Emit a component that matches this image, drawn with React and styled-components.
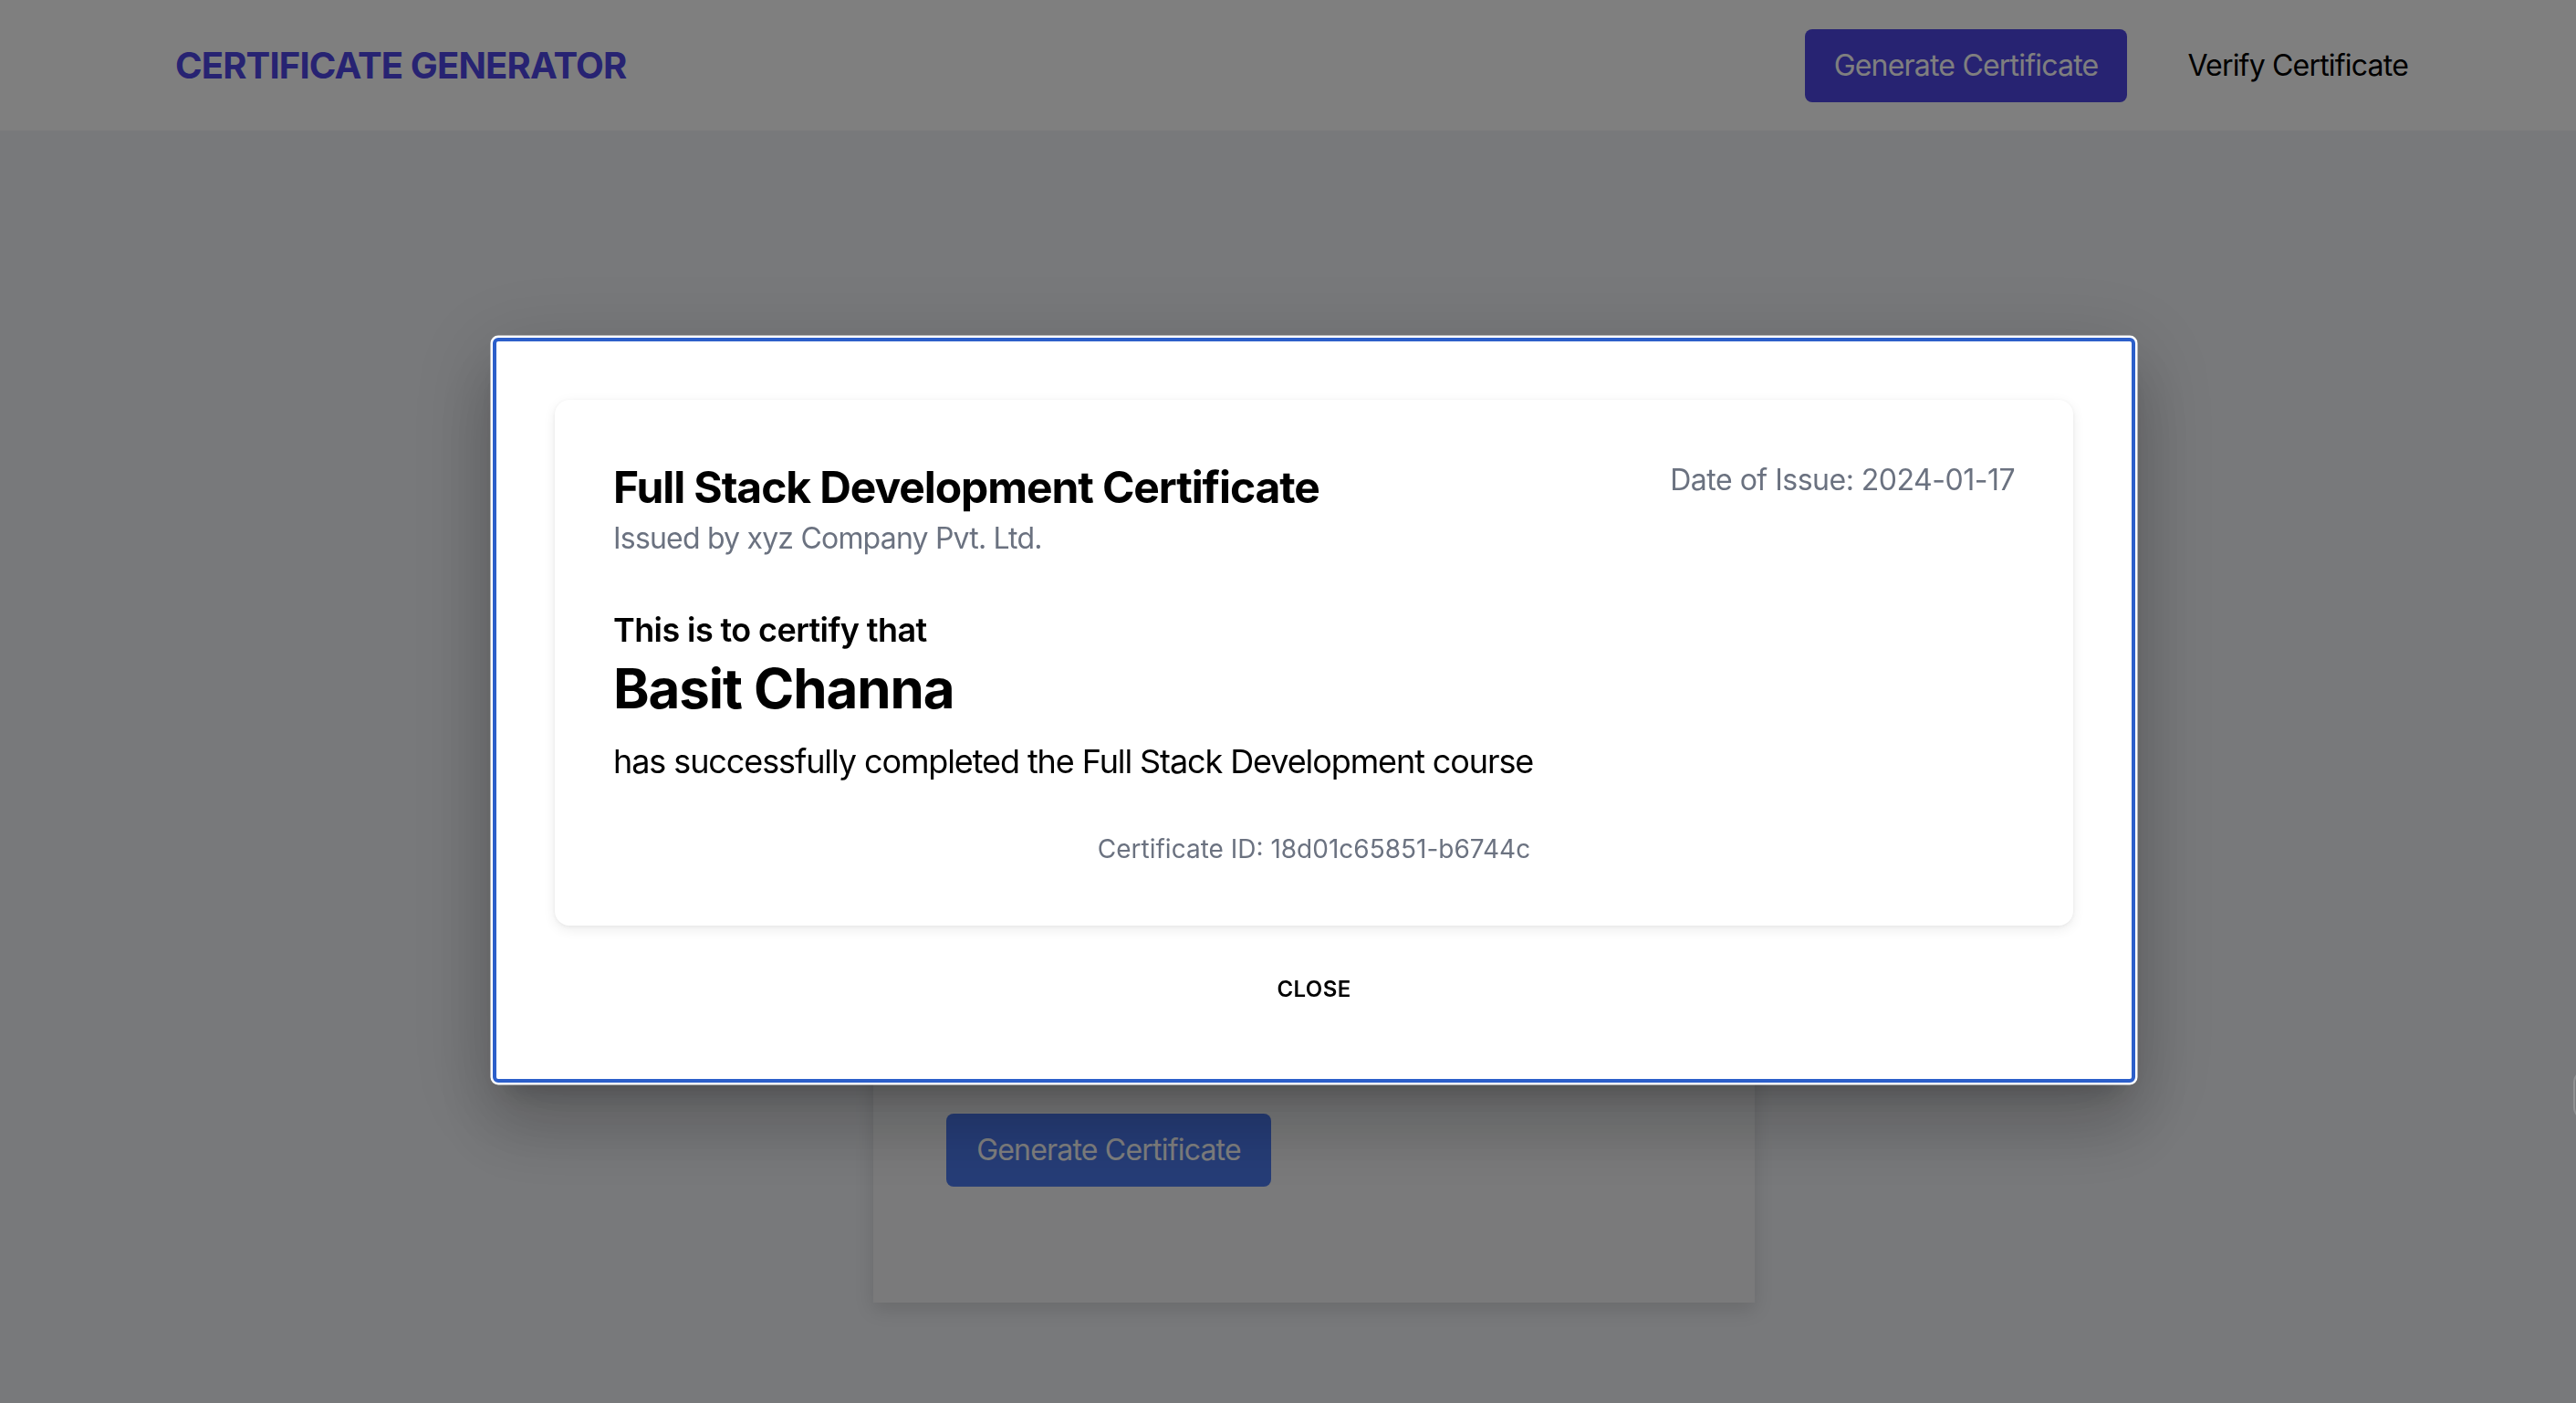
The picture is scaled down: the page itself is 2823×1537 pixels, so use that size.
import React from "react";
import styled, { createGlobalStyle } from "styled-components";

const Global = createGlobalStyle`
  html, body { margin: 0; padding: 0; }
  body {
    font-family: Inter, "Noto Sans", "Liberation Sans", sans-serif;
    background: #f0f2f6;
    color: #000;
    overflow: hidden;
  }
  * { box-sizing: border-box; }
`;

const Page = styled.div`
  min-height: 100vh;
  display: flex;
  flex-direction: column;
`;

const Header = styled.header`
  height: 143px;
  background: #ffffff;
  display: flex;
  align-items: center;
  justify-content: space-between;
  padding: 0 152px 0 192px;
`;

const Brand = styled.h1`
  margin: 0;
  font-size: 40px;
  line-height: 56px;
  font-weight: 700;
  color: #4f46e5;
  letter-spacing: -0.85px;
`;

const Nav = styled.nav`
  display: flex;
  align-items: center;
  gap: 34px;
`;

const NavButton = styled.button`
  height: 80px;
  padding: 0 32px;
  border: none;
  border-radius: 8px;
  font-family: inherit;
  font-size: 32px;
  line-height: 48px;
  letter-spacing: -0.8px;
  background: ${(p) => (p.$active ? "#4f46e5" : "transparent")};
  color: ${(p) => (p.$active ? "#ffffff" : "#000000")};
  cursor: pointer;
`;

const Main = styled.main`
  flex: 1;
  display: flex;
  justify-content: center;
  align-items: flex-start;
  padding: 277px 0 0 57px;
`;

const FormCard = styled.section`
  width: 966px;
  background: #f4f5f7;
  box-shadow: 0 8px 20px rgba(0, 0, 0, 0.12);
  padding: 80px 80px 127px;
  display: flex;
  flex-direction: column;
`;

const Fields = styled.div`
  display: grid;
  gap: 40px;
  margin-bottom: 120px;
`;

const Input = styled.input`
  height: 120px;
  border: 2px solid #d1d5db;
  border-radius: 8px;
  background: #fff;
`;

const SubmitButton = styled.button`
  align-self: flex-start;
  width: 356px;
  height: 80px;
  border: none;
  border-radius: 8px;
  background: #4c7aef;
  color: #fff;
  font-family: inherit;
  font-size: 32px;
  line-height: 48px;
  letter-spacing: -0.8px;
`;

const Overlay = styled.div`
  position: fixed;
  inset: 0;
  background: rgba(0, 0, 0, 0.5);
  display: flex;
  align-items: center;
  justify-content: center;
  padding: 19px 0 0 57px;
`;

const Modal = styled.div`
  width: 1800px;
  background: #ffffff;
  border: 4px solid #2c5fca;
  border-radius: 6px;
  box-shadow: 0 0 0 2.5px #ffffff, 0 22px 30px -14px rgba(0, 0, 0, 0.2),
    0 48px 76px 6px rgba(0, 0, 0, 0.14), 0 18px 92px 16px rgba(0, 0, 0, 0.12);
  padding: 64px 64px 0;
  display: flex;
  flex-direction: column;
`;

const Certificate = styled.article`
  background: #ffffff;
  border-radius: 16px;
  box-shadow: 0 4px 14px rgba(0, 0, 0, 0.08), 0 1px 4px rgba(0, 0, 0, 0.05);
  padding: 64px;
  display: flex;
  flex-direction: column;
`;

const TopRow = styled.div`
  display: flex;
  justify-content: space-between;
  align-items: flex-start;
`;

const Titles = styled.div`
  display: flex;
  flex-direction: column;
`;

const CertTitle = styled.h2`
  margin: 0;
  font-size: 48px;
  line-height: 64px;
  font-weight: 700;
  letter-spacing: -1.1px;
`;

const Muted = styled.p`
  margin: 0;
  font-size: ${(p) => p.$size || 32}px;
  line-height: ${(p) => p.$line || 48}px;
  letter-spacing: ${(p) => (p.$tight ? p.$tight : 0)}px;
  color: #6b7280;
  text-align: ${(p) => p.$align || "left"};
  margin-top: ${(p) => p.$mt || 0}px;
`;

const Lead = styled.p`
  margin: 48px 0 0;
  font-size: 36px;
  line-height: 56px;
  font-weight: 600;
  letter-spacing: -0.6px;
`;

const Recipient = styled.p`
  margin: 0;
  font-size: 60px;
  line-height: 72px;
  font-weight: 700;
  letter-spacing: -1.1px;
`;

const Body = styled.p`
  margin: 16px 0 0;
  font-size: 36px;
  line-height: 56px;
  font-weight: 400;
  letter-spacing: -1.1px;
`;

const Actions = styled.div`
  display: flex;
  justify-content: center;
  padding: 40px 0 68px;
`;

const CloseButton = styled.button`
  border: none;
  background: transparent;
  padding: 12px 16px;
  font-family: inherit;
  font-size: 24px;
  line-height: 36px;
  font-weight: 600;
  letter-spacing: 0.4px;
  color: #000;
  text-transform: uppercase;
  cursor: pointer;
`;

const EdgeTab = styled.div`
  position: fixed;
  right: -42px;
  top: 1172px;
  width: 45px;
  height: 55px;
  border: 2px solid rgba(255, 255, 255, 0.18);
  border-radius: 14px;
`;

export default function App() {
  return (
    <>
      <Global />
      <Page>
        <Header>
          <Brand>CERTIFICATE GENERATOR</Brand>
          <Nav>
            <NavButton $active>Generate Certificate</NavButton>
            <NavButton>Verify Certificate</NavButton>
          </Nav>
        </Header>
        <Main>
          <FormCard>
            <Fields>
              <Input aria-label="name" />
              <Input aria-label="course" />
              <Input aria-label="date" />
              <Input aria-label="email" />
            </Fields>
            <SubmitButton>Generate Certificate</SubmitButton>
          </FormCard>
        </Main>
      </Page>
      <Overlay>
        <Modal>
          <Certificate>
            <TopRow>
              <Titles>
                <CertTitle>Full Stack Development Certificate</CertTitle>
                <Muted $tight={-0.8}>Issued by xyz Company Pvt. Ltd.</Muted>
              </Titles>
              <Muted $tight={-0.5}>Date of Issue: 2024-01-17</Muted>
            </TopRow>
            <Lead>This is to certify that</Lead>
            <Recipient>Basit Channa</Recipient>
            <Body>has successfully completed the Full Stack Development course</Body>
            <Muted $size={28} $line={40} $align="center" $mt={48}>
              Certificate ID: 18d01c65851-b6744c
            </Muted>
          </Certificate>
          <Actions>
            <CloseButton>Close</CloseButton>
          </Actions>
        </Modal>
      </Overlay>
      <EdgeTab />
    </>
  );
}
